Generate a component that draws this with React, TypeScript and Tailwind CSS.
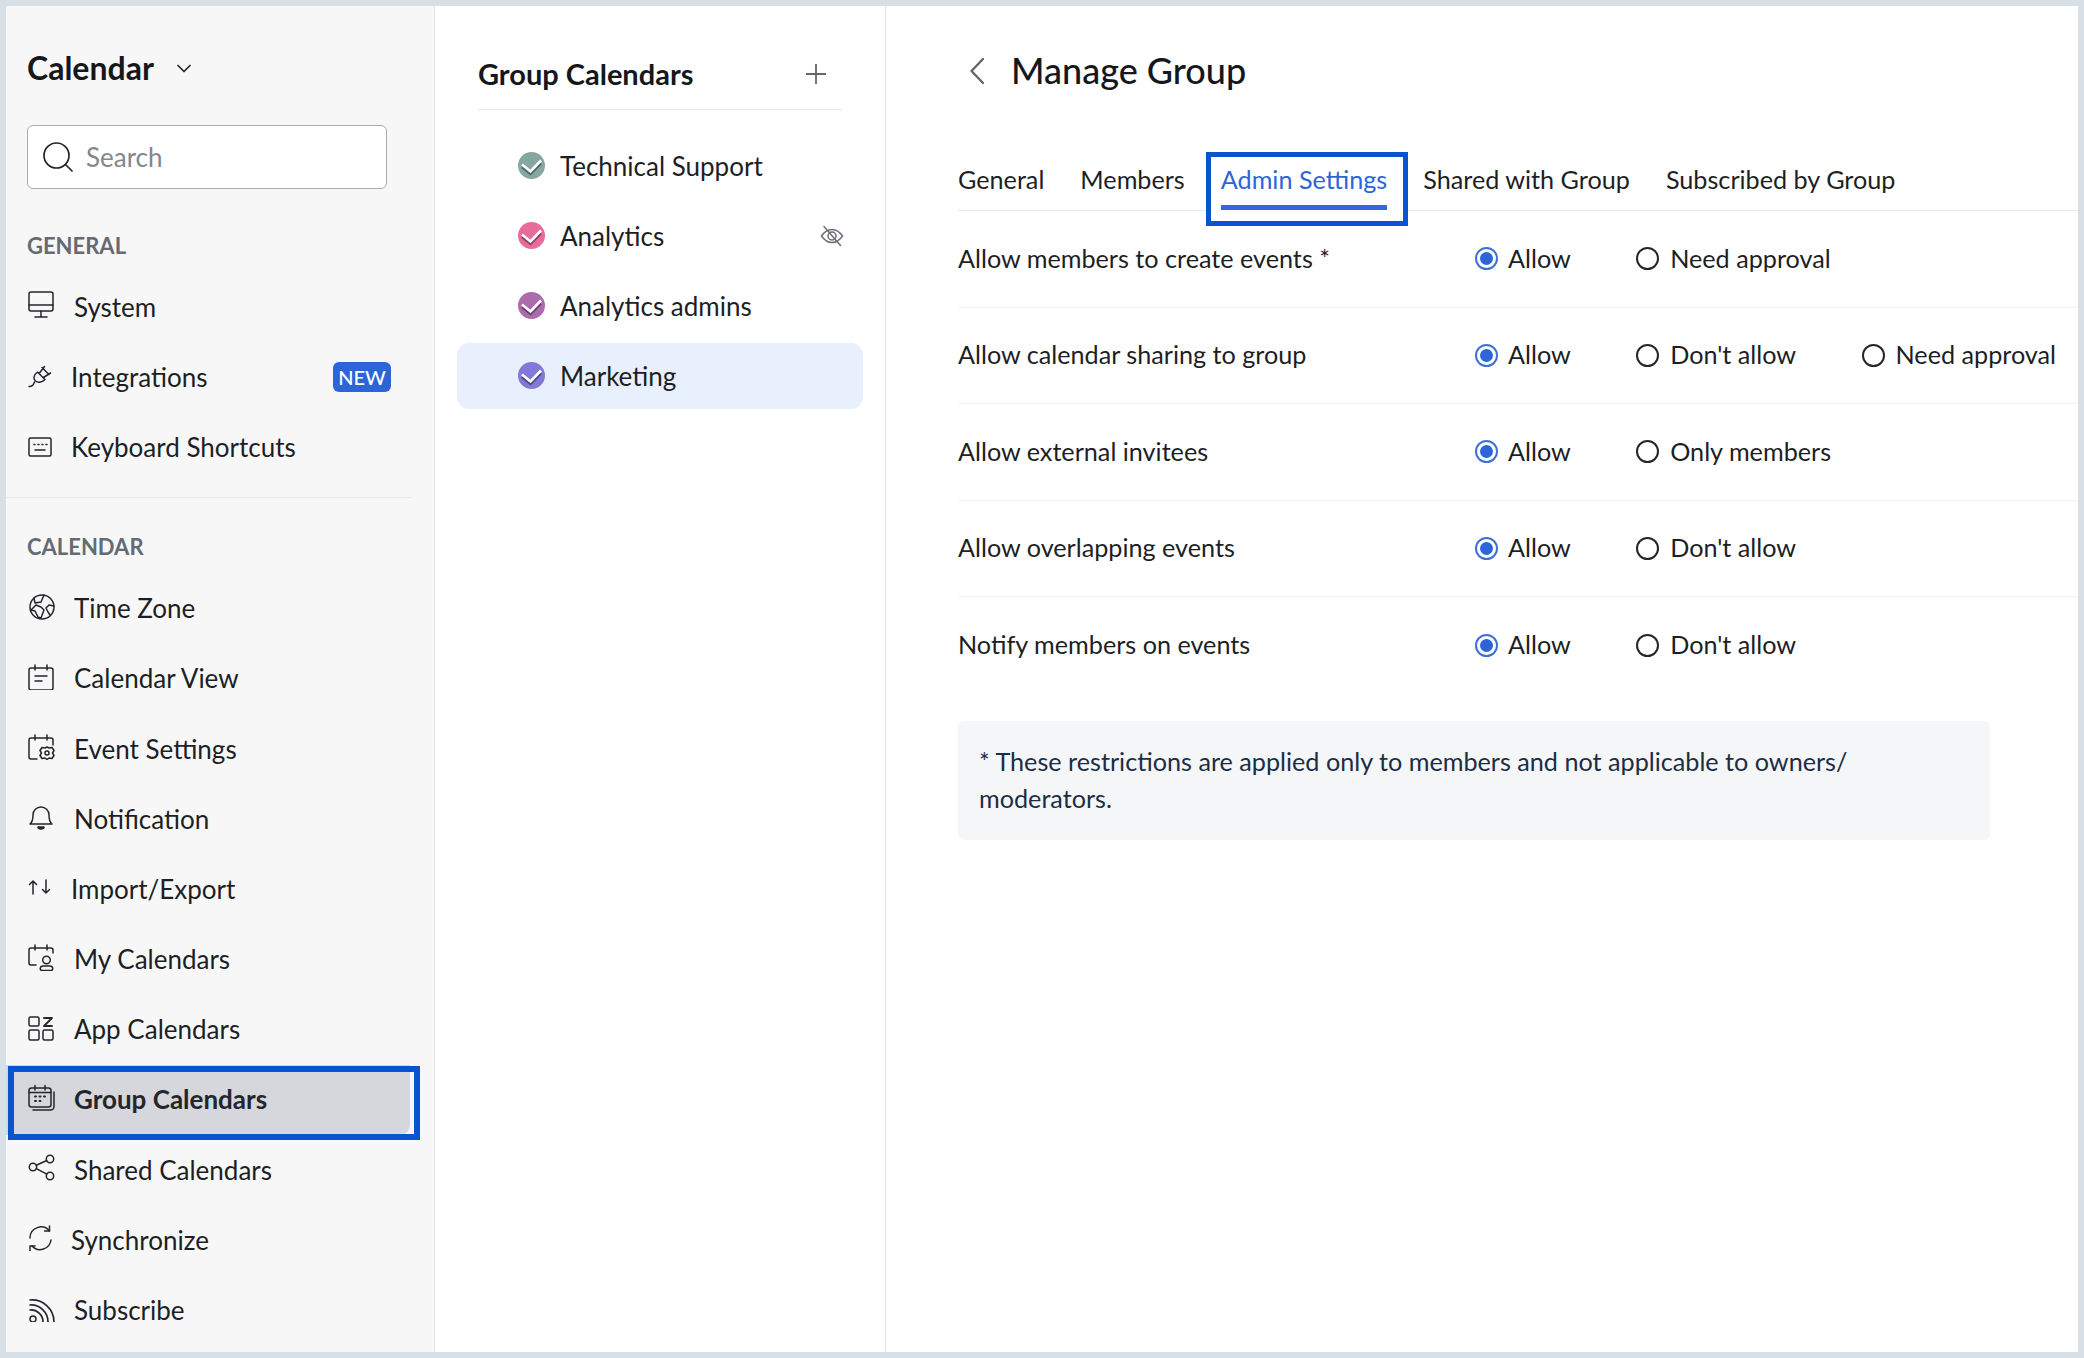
import React from "react";

const I = ({ children, className = "" }: { children: React.ReactNode; className?: string }) => (
  <svg viewBox="0 0 28 28" fill="none" stroke="currentColor" strokeWidth="1.5" strokeLinecap="round" strokeLinejoin="round" className={"w-[28px] h-[28px] shrink-0 -translate-y-[3px] text-[#24262b] " + className}>
    {children}
  </svg>
);

const icons: Record<string, React.ReactNode> = {
  system: (<><rect x="2" y="2" width="24" height="19" rx="2" /><path d="M2 15h24M14 21v6M8 27h12" /></>),
  plug: (<><path d="M2 26.5c3 .2 4.500-1.200 5.500-4.500" /><path d="M10.500 12l7.500 7.500c-3.500 3.500-7.500 3.500-9.800 1.300S6.800 15 10.500 12z" /><path d="M12.500 13l5-6.500M16.500 17.500l7-4.500M15 7.500l7 7" /></>),
  keyboard: (<><rect x="2" y="8" width="22" height="18" rx="1.500" /><path d="M7 14.500h1M11 14.500h1M15 14.500h1M19 14.500h1M8 20h10" /></>),
  globe: (<><circle cx="15" cy="15" r="12" /><path d="M7 6l1 5 6-1 3-7M4 18l5-5 5 2 3 3-3 8-3-1-3-6zM27 14l-5-1-3 3 2 4 2 3" /></>),
  calview: (<><rect x="2" y="6" width="24" height="22" rx="2" /><path d="M8 3v5M20 3v5M8 14h12M8 19h7" /></>),
  event: (<><path d="M10 27H4a2 2 0 0 1-2-2V8a2 2 0 0 1 2-2h20a2 2 0 0 1 2 2v5" /><path d="M8 3v5M20 3v5" /><path d="M20 15l2 1 3-.500 2 3-1.500 2.500 1.500 2.500-2 3-3-.500-2 1.500-2-1.500-3 .500-2-3 1.500-2.500L13 18.500l2-3 3 .500z" /><circle cx="20" cy="21" r="2" /></>),
  bell: (<><path d="M3 22c2.500-2 3-4 3-9a8 8 0 0 1 16 0c0 5 .500 7 3 9z" /><path d="M11 25h6c0 1.500-1.500 2-3 2s-3-.500-3-2z" fill="currentColor" /></>),
  arrows: (<><path d="M6 22V9M2.500 12.500L6 9l3.500 3.500M19 8v13M15.500 17.500L19 21l3.500-3.500" /></>),
  mycal: (<><path d="M9 22H4a2 2 0 0 1-2-2V7a2 2 0 0 1 2-2h20a2 2 0 0 1 2 2v3" /><path d="M8 2v5M20 2v5" /><circle cx="19.500" cy="17" r="3.800" /><path d="M15 27.500c-2.500 0-2.500-4.500 1-4.500h7c3.500 0 3.500 4.500 1 4.500z" /></>),
  apps: (<><rect x="2" y="4" width="10" height="9" rx="1.500" /><rect x="2" y="17" width="10" height="10" rx="1.500" /><rect x="16" y="17" width="10" height="10" rx="1.500" /><path d="M17 5h8l-8 8h8" strokeWidth="1.800" /></>),
  group: (<><rect x="2" y="5" width="22" height="19" rx="2.500" /><path d="M8 2.500V7M18 2.500V7M2 9.500h22M27 9v14.500a3.500 3.500 0 0 1-3.500 3.500H6" /><path d="M8 13.500h1M12.500 13.500h1M17 13.500h1M8 18h1M12.500 18h1" strokeWidth="2" /></>),
  share: (<><circle cx="6" cy="14" r="3.700" /><circle cx="23" cy="6" r="3.700" /><circle cx="23" cy="23" r="3.700" /><path d="M9.300 12.300l10.500-4.800M9.300 15.700l10.500 5.500" /></>),
  sync: (<><path d="M3 15a11 11 0 0 1 19.500-7" /><path d="M22.500 3v5h-5" /><path d="M24 17A11 11 0 0 1 5 23" /><path d="M3 28v-5h5" /></>),
  rss: (<><circle cx="6" cy="25" r="3" /><path d="M3 16a12 12 0 0 1 13 12M3 11a17 17 0 0 1 18 17M3 6a22 22 0 0 1 24 21.500" strokeWidth="1.700" /></>),
};

const Row = ({ icon, label, ml, badge }: { icon: string; label: string; ml: string; badge?: boolean }) => (
  <div className="flex items-center h-[70.2px] pl-[21px] pr-[43px] text-[26px] text-[#1d1f24]">
    <I>{icons[icon]}</I>
    <span className={ml}>{label}</span>
    {badge && <span className="ml-auto w-[58px] h-[30px] flex items-center justify-center rounded-[6px] bg-[#2d65d8] text-white text-[20px] font-medium">NEW</span>}
  </div>
);

const Heading = ({ children, className }: { children: React.ReactNode; className: string }) => (
  <div className={"h-[30px] pl-[21px] flex items-center text-[22px] font-bold text-[#666a72] " + className}>{children}</div>
);

const Check = ({ color }: { color: string }) => (
  <svg viewBox="0 0 27 27" className="w-[27px] h-[27px] shrink-0 -translate-y-[1px]">
    <circle cx="13.500" cy="13.500" r="13.500" fill={color} />
    <path d="M4 15l8.500 7 10.500-10.500" fill="none" stroke="#000" strokeOpacity="0.4" strokeWidth="2.400" />
    <path d="M4 12.500l8.500 7 10.500-11" fill="none" stroke="#fff" strokeWidth="2.600" />
  </svg>
);

const GroupRow = ({ color, label, selected, hidden }: { color: string; label: string; selected?: boolean; hidden?: boolean }) => (
  <div className={"flex items-center h-[66px] pt-[2px] pl-[61px] pr-[19px] rounded-[12px] text-[26px] text-[#1d1f24] " + (selected ? "bg-[#e8f0fd]" : "")}>
    <Check color={color} />
    <span className="ml-[15px]">{label}</span>
    {hidden && (
      <svg viewBox="0 0 24 22" fill="none" stroke="#6c6f75" strokeWidth="1.500" strokeLinecap="round" className="ml-auto w-[24px] h-[22px]">
        <path d="M1.500 11C5 6 8.500 4.500 12 4.500S19 6 22.500 11C19 16 15.500 17.500 12 17.500S5 16 1.500 11z" />
        <circle cx="12" cy="11" r="4" />
        <path d="M4 1.500L20.500 20.500" />
      </svg>
    )}
  </div>
);

const Radio = ({ on, label, last }: { on?: boolean; label: string; last?: boolean }) => (
  <div className={"flex items-center " + (last ? "" : "mr-[65.400px]")}>
    {on ? (
      <span className="w-[23px] h-[23px] rounded-full border-2 border-[#3d6fd9] flex items-center justify-center">
        <span className="w-[13px] h-[13px] rounded-full bg-[#2d65d8]" />
      </span>
    ) : (
      <span className="w-[23px] h-[23px] rounded-full border-2 border-[#23252a]" />
    )}
    <span className={on ? "ml-[10px]" : "ml-[11px]"}>{label}</span>
  </div>
);

const SettingRow = ({ label, options, last }: { label: string; options: string[]; last?: boolean }) => (
  <div className={"flex items-center h-[96.500px] text-[25.200px] text-[#1d1f24] " + (last ? "" : "border-b border-[#f1f2f4]")}>
    <div className="w-[517px] shrink-0">{label}</div>
    <Radio on label="Allow" />
    {options.map((o, i) => <Radio key={o} label={o} last={i === options.length - 1} />)}
  </div>
);

export default function App() {
  return (
    <div className="w-[2084px] h-[1358px] overflow-hidden bg-[#d7e0e6] p-[6px] font-['Lato',sans-serif]">
      <div className="flex h-full bg-white">
        <aside className="w-[429px] shrink-0 bg-[#f7f7f8] border-r border-[#e3e6ea]">
          <div className="mt-[42px] h-[40px] pl-[21px] flex items-center">
            <span className="text-[32px] font-bold text-[#15171c]">Calendar</span>
            <svg viewBox="0 0 14 9" fill="none" stroke="#24262b" strokeWidth="1.700" strokeLinecap="round" strokeLinejoin="round" className="ml-[23px] w-[14px] h-[9px]"><path d="M1 1.500l6 6 6-6" /></svg>
          </div>
          <div className="mt-[37px] ml-[21px] w-[360px] h-[64px] flex items-center rounded-[6px] border border-[#a9abb0] bg-white pl-[15px]">
            <svg viewBox="0 0 30 30" fill="none" stroke="#23252a" strokeWidth="1.700" strokeLinecap="round" className="w-[30px] h-[30px] shrink-0"><circle cx="13.500" cy="13.500" r="12.500" /><path d="M22.500 22.500l6.500 6.500" /></svg>
            <span className="ml-[13px] text-[26px] text-[#85878c]">Search</span>
          </div>
          <Heading className="mt-[41px]">GENERAL</Heading>
          <div className="mt-[12px]">
            <Row icon="system" label="System" ml="ml-[19px]" />
            <Row icon="plug" label="Integrations" ml="ml-[16px]" badge />
            <Row icon="keyboard" label="Keyboard Shortcuts" ml="ml-[16px]" />
          </div>
          <div className="mt-[14px] mr-[22px] border-t border-[#e6e8eb]" />
          <Heading className="mt-[34px]">CALENDAR</Heading>
          <div className="mt-[12px]">
            <Row icon="globe" label="Time Zone" ml="ml-[19px]" />
            <Row icon="calview" label="Calendar View" ml="ml-[19px]" />
            <Row icon="event" label="Event Settings" ml="ml-[19px]" />
            <Row icon="bell" label="Notification" ml="ml-[19px]" />
            <Row icon="arrows" label="Import/Export" ml="ml-[16px]" />
            <Row icon="mycal" label="My Calendars" ml="ml-[19px]" />
            <Row icon="apps" label="App Calendars" ml="ml-[19px]" />
            <div className="relative flex items-center h-[70.2px] pl-[21px] text-[26px] font-bold text-[#24262b] bg-[#d6d7dc] mr-[24px] rounded-br-[10px]">
              <I>{icons.group}</I>
              <span className="ml-[19px]">Group Calendars</span>
              <div className="absolute left-[2px] -right-[10px] top-[1px] -bottom-[5px] border-[6px] border-[#0a55cf]" />
            </div>
            <Row icon="share" label="Shared Calendars" ml="ml-[19px]" />
            <Row icon="sync" label="Synchronize" ml="ml-[16px]" />
            <Row icon="rss" label="Subscribe" ml="ml-[19px]" />
          </div>
        </aside>

        <section className="w-[451px] shrink-0 border-r border-[#e3e6ea]">
          <div className="ml-[43px] mr-[43px] h-[104px] pt-[48px] flex items-start border-b border-[#e6e8eb]">
            <div className="flex items-center justify-between w-full h-[40px]">
              <span className="text-[29px] font-bold text-[#15171c]">Group Calendars</span>
              <svg viewBox="0 0 22 22" fill="none" stroke="#63666c" strokeWidth="1.800" className="mr-[15px] w-[22px] h-[22px]"><path d="M11 1v20M1 11h20" /></svg>
            </div>
          </div>
          <div className="mt-[22px] ml-[22px] w-[406px] flex flex-col gap-[4.200px]">
            <GroupRow color="#85a7a0" label="Technical Support" />
            <GroupRow color="#e76c99" label="Analytics" hidden />
            <GroupRow color="#ac6bad" label="Analytics admins" />
            <GroupRow color="#8278d8" label="Marketing" selected />
          </div>
        </section>

        <main className="flex-1 min-w-0 pl-[72px]">
          <div className="mt-[34px] h-[60px] flex items-center">
            <svg viewBox="0 0 16 28" fill="none" stroke="#63666c" strokeWidth="2.400" strokeLinecap="round" strokeLinejoin="round" className="ml-[11px] w-[16px] h-[28px] translate-y-[1px]"><path d="M14 2L2.500 14 14 26" /></svg>
            <span className="ml-[26px] text-[36px] font-medium text-[#15171c]">Manage Group</span>
          </div>
          <div className="mt-[50px] h-[61px] flex gap-[36px] border-b border-[#e6e8eb] text-[25.200px] text-[#1d1f24]">
            <div className="h-[60px] flex items-center">General</div>
            <div className="h-[60px] flex items-center">Members</div>
            <div className="relative h-[60px] flex items-center text-[#2d65d8]">
              Admin Settings
              <span className="absolute -left-[15px] -right-[21px] -bottom-[1px] h-[1px] bg-white" />
              <span className="absolute left-0 right-0 bottom-0 h-[5px] bg-[#3567d9]" />
              <span className="absolute -left-[15px] -right-[21px] top-[2px] -bottom-[16px] border-[5.500px] border-[#0a55cf]" />
            </div>
            <div className="h-[60px] flex items-center">Shared with Group</div>
            <div className="h-[60px] flex items-center">Subscribed by Group</div>
          </div>
          <SettingRow label="Allow members to create events *" options={["Need approval"]} />
          <SettingRow label="Allow calendar sharing to group" options={["Don't allow", "Need approval"]} />
          <SettingRow label="Allow external invitees" options={["Only members"]} />
          <SettingRow label="Allow overlapping events" options={["Don't allow"]} />
          <SettingRow label="Notify members on events" options={["Don't allow"]} last />
          <div className="mt-[27px] w-[1032px] h-[119px] rounded-[6px] bg-[#f4f6f8] px-[21px] pt-[22px] text-[25.200px] leading-[37.500px] text-[#1d2d44]">
            * These restrictions are applied only to members and not applicable to owners/ moderators.
          </div>
        </main>
      </div>
    </div>
  );
}
